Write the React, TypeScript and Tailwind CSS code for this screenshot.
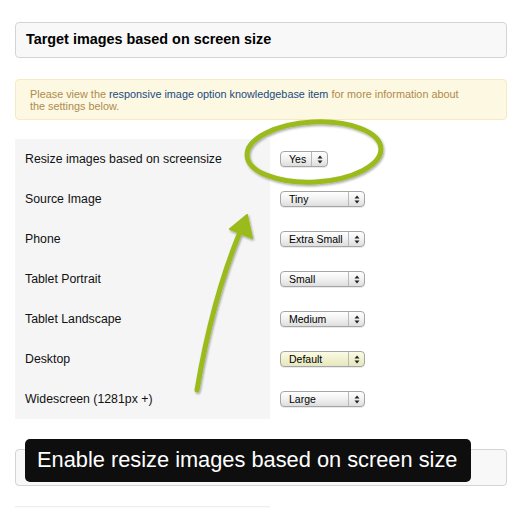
import React from "react";

const rows: { label: string; value: string; w: "sm" | "lg"; hl?: boolean }[] = [
  { label: "Resize images based on screensize", value: "Yes", w: "sm" },
  { label: "Source Image", value: "Tiny", w: "lg" },
  { label: "Phone", value: "Extra Small", w: "lg" },
  { label: "Tablet Portrait", value: "Small", w: "lg" },
  { label: "Tablet Landscape", value: "Medium", w: "lg" },
  { label: "Desktop", value: "Default", w: "lg", hl: true },
  { label: "Widescreen (1281px +)", value: "Large", w: "lg" },
];

function Select({ value, w, hl }: { value: string; w: "sm" | "lg"; hl?: boolean }) {
  return (
    <div
      className={`flex h-[16px] items-stretch rounded-[4px] border border-[#a5a5a5] shadow-[0_1px_0_rgba(0,0,0,0.08)] ${
        w === "sm" ? "w-[48px]" : "w-[85px]"
      } ${
        hl
          ? "bg-gradient-to-b from-[#fbfbe6] via-[#f1f1cf] to-[#e6e6bf]"
          : "bg-gradient-to-b from-[#ffffff] via-[#f1f1f1] to-[#dedede]"
      }`}
    >
      <div className="flex flex-1 items-center overflow-hidden whitespace-nowrap pl-[8px] text-[10.5px] leading-none text-black">
        {value}
      </div>
      <div className="flex w-[16px] shrink-0 flex-col items-center justify-center border-l border-[#b8b8b8]">
        <svg width="6" height="9" viewBox="0 0 6 9">
          <path d="M3 0.5 L5.5 3.5 L0.5 3.5 Z" fill="#222" />
          <path d="M3 8.5 L5.5 5.5 L0.5 5.5 Z" fill="#222" />
        </svg>
      </div>
    </div>
  );
}

export default function App() {
  return (
    <div
      className="relative h-[508px] w-[518px] overflow-hidden bg-white pl-[15px] pr-[11px] pt-[22px]"
      style={{ fontFamily: '"Liberation Sans", Arial, sans-serif' }}
    >
      <div className="flex h-[36px] items-center rounded-[4px] border border-[#d4d4d4] bg-[#f8f8f8] px-[10px] text-[14.4px] font-bold text-black">
        Target images based on screen size
      </div>

      <div className="mt-[21px] h-[41px] rounded-[4px] border border-[#f8e8c4] bg-[#fcf8e1] px-[14px] pt-[8px] text-[10.85px] leading-[12px] text-[#b08a4e]">
        Please view the <span className="text-[#1b4a82]">responsive image option knowledgebase item</span> for
        more information about
        <br />
        the settings below.
      </div>

      <div className="mt-[19px] grid grid-cols-[255px_1fr]">
        {rows.map((r) => (
          <React.Fragment key={r.label}>
            <div className="flex h-[40px] items-center bg-[#f5f5f5] pl-[10px] text-[12.3px] text-[#111]">
              {r.label}
            </div>
            <div className="flex h-[40px] items-center pl-[10px]">
              <Select value={r.value} w={r.w} hl={r.hl} />
            </div>
          </React.Fragment>
        ))}
      </div>

      <div className="mt-[30px] flex h-[37px] items-center rounded-[4px] border border-[#d4d4d4] bg-[#f8f8f8] px-[10px] text-[14.4px] font-bold text-black">
        Full-width image setting
      </div>

      <div className="mt-[20px] h-[20px] w-[255px] border-t border-[#eeeeee] bg-[#f9f9f9]" />

      <svg
        className="pointer-events-none absolute left-0 top-0"
        width="518"
        height="508"
        viewBox="0 0 518 508"
      >
        <defs>
          <filter id="sh" x="-20%" y="-20%" width="140%" height="140%">
            <feDropShadow dx="1" dy="1.5" stdDeviation="1.2" floodColor="#000" floodOpacity="0.35" />
          </filter>
        </defs>
        <g filter="url(#sh)">
          <ellipse
            cx="314"
            cy="152"
            rx="67"
            ry="30"
            transform="rotate(-3 314 152)"
            fill="none"
            stroke="#9bbb1c"
            strokeWidth="5"
          />
          <path
            d="M197 390 Q212 300 240 232"
            fill="none"
            stroke="#9bbb1c"
            strokeWidth="5"
            strokeLinecap="round"
          />
          <path d="M247 215 L252 238 L230 229 Z" fill="#9bbb1c" stroke="#9bbb1c" strokeWidth="2" strokeLinejoin="round" />
        </g>
      </svg>

      <div className="absolute left-[25px] top-[439px] flex h-[43px] w-[446px] items-center rounded-[5px] bg-[#0e0e0e] pl-[12px] text-[21.8px] text-white">
        Enable resize images based on screen size
      </div>
    </div>
  );
}
